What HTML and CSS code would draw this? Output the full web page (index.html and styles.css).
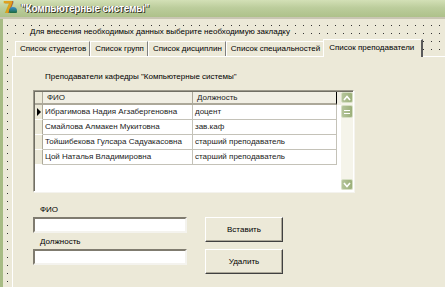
FILE: index.html
```html
<!DOCTYPE html>
<html lang="ru">
<head>
  <meta charset="UTF-8" />
  <title>Компьютерные системы</title>
  <link rel="stylesheet" href="styles.css">
</head>
<body>

  <div class="window">
    <!-- TITLE BAR -->
    <div class="titlebar">
      <span class="app-icon"><span class="seven">7</span><span class="helmet"></span></span>
      <span class="title">"Компьютерные системы"</span>
    </div>

    <!-- FORM CLIENT AREA -->
    <div class="client">
      <p class="hint">Для внесения необходимых данных выберите необходимую закладку</p>

      <div class="pages">
        <div class="tabs">
          <div class="tab">Список студентов</div>
          <div class="tab">Список групп</div>
          <div class="tab">Список дисциплин</div>
          <div class="tab">Список специальностей</div>
          <div class="tab active">Список преподаватели</div>
        </div>

        <div class="page">
          <p class="caption">Преподаватели кафедры "Компьютерные системы"</p>

          <div class="grid">
            <div class="table">
              <div class="row head">
                <div class="ind"></div>
                <div class="cell">ФИО</div>
                <div class="cell last">Должность</div>
              </div>
              <div class="row">
                <div class="ind"><span class="pointer"></span></div>
                <div class="cell">Ибрагимова Надия Агзабергеновна</div>
                <div class="cell">доцент</div>
              </div>
              <div class="row">
                <div class="ind"></div>
                <div class="cell">Смайлова Алмакен Мукитовна</div>
                <div class="cell">зав.каф</div>
              </div>
              <div class="row">
                <div class="ind"></div>
                <div class="cell">Тойшибекова Гулсара Садуакасовна</div>
                <div class="cell">старший преподаватель</div>
              </div>
              <div class="row">
                <div class="ind"></div>
                <div class="cell">Цой Наталья Владимировна</div>
                <div class="cell">старший преподаватель</div>
              </div>
            </div>

            <div class="vscroll">
              <div class="sb-btn">
                <svg width="8" height="6" viewBox="0 0 8 6"><path d="M1 5 L4 1.5 L7 5" fill="none" stroke="#fff" stroke-width="1.6"/></svg>
              </div>
              <div class="sb-thumb">
                <svg width="6" height="6" viewBox="0 0 6 6"><path d="M0 1.5 H6 M0 4.5 H6" stroke="#fff" stroke-width="1"/></svg>
              </div>
              <div class="sb-track"></div>
              <div class="sb-btn">
                <svg width="8" height="6" viewBox="0 0 8 6"><path d="M1 1 L4 4.5 L7 1" fill="none" stroke="#fff" stroke-width="1.6"/></svg>
              </div>
            </div>
          </div>

          <div class="editor">
            <div class="fields">
              <label>ФИО</label>
              <input type="text" class="edit" />
              <label class="second">Должность</label>
              <input type="text" class="edit" />
            </div>
            <div class="buttons">
              <button class="btn">Вставить</button>
              <button class="btn">Удалить</button>
            </div>
          </div>
        </div>
      </div>
    </div>
  </div>

</body>
</html>
```

FILE: styles.css
```css
* {
  box-sizing: border-box;
  margin: 0;
  padding: 0;
}

body {
  font-family: "Liberation Sans", Arial, sans-serif;
  font-size: 8px;
  color: #000;
  background: #ece9d8;
  overflow: hidden;
}

.window {
  width: 445px;
  height: 287px;
  display: flex;
  flex-direction: column;
  overflow: hidden;
}

/* TITLE BAR */
.titlebar {
  height: 19px;
  flex-shrink: 0;
  display: flex;
  align-items: center;
  padding-left: 3px;
  background: linear-gradient(#d3e0b6, #bccd9c 45%, #aec18a);
  border-bottom: 2px solid #c9c6b3;
}

.app-icon {
  position: relative;
  width: 14px;
  height: 15px;
  margin-right: 4px;
}

.seven {
  font-family: "DejaVu Sans", sans-serif;
  font-weight: bold;
  font-size: 15px;
  line-height: 15px;
  color: #e0a020;
  text-shadow: 1px 0 #8a5a10;
}

.helmet {
  position: absolute;
  left: 6px;
  top: 6px;
  width: 8px;
  height: 6px;
  border-radius: 4px 4px 1px 1px;
  background: linear-gradient(#3a8fd0, #1d6a3c);
}

.title {
  font-weight: bold;
  font-size: 10px;
  color: #fff;
  letter-spacing: -0.2px;
  text-shadow: 1px 1px 0 #3a3a2a, -1px 0 0 #6a6a50;
}

/* CLIENT AREA WITH DESIGN GRID */
.client {
  flex: 1;
  border-left: 3px solid #a7bb84;
  padding-left: 9px;
  background-color: #ece9d8;
  background-image: radial-gradient(circle at 0.5px 0.5px, #333 0.6px, transparent 0.8px);
  background-size: 8px 8px;
  background-position: 4px 6px;
}

.hint {
  margin: 8px 0 0 18px;
  line-height: 10px;
  font-size: 8px;
  background: #ece9d8;
  width: max-content;
}

/* PAGE CONTROL */
.pages {
  margin-top: 2px;
  width: 460px;
}

.tabs {
  display: flex;
  align-items: flex-end;
  height: 17px;
  padding-left: 3px;
}

.tab {
  height: 15px;
  line-height: 13px;
  padding: 0 3px 0 4px;
  font-size: 8px;
  background: #ece9d8;
  border-top: 1px solid #fff;
  border-left: 1px solid #fff;
  border-right: 1px solid #808080;
  white-space: nowrap;
}

.tab.active {
  line-height: 15px;
  margin-left: -1px;
  padding: 0 7px 0 5px;
  border-right: 2px solid #5a5a5a;
  position: relative;
  z-index: 1;
  margin-bottom: -1px;
  height: 18px;
}

.page {
  height: 240px;
  background: #ece9d8;
  border-top: 1px solid #fff;
  border-left: 1px solid #fff;
  padding: 15px 0 0 20px;
}

.caption {
  margin-left: 12px;
  line-height: 10px;
  font-size: 8px;
}

/* DB GRID */
.grid {
  margin-top: 8px;
  width: 321px;
  height: 102px;
  display: flex;
  background: #fff;
  border: 1px solid;
  border-color: #9d9a8c #fff #fff #9d9a8c;
  box-shadow: inset 1px 1px 0 #716f64, 1px 1px 0 #f4f3ee;
  padding: 1px 0 1px 1px;
}

.table {
  flex: 1;
}

.row {
  display: grid;
  grid-template-columns: 8px 150px 144px;
  height: 15px;
  line-height: 14px;
  color: #222;
}

.row .cell {
  padding-left: 2px;
  border-bottom: 1px solid #c4c2b8;
  border-right: 1px solid #c4c2b8;
  white-space: nowrap;
  overflow: hidden;
}

.row.head {
  height: 13px;
  line-height: 12px;
  background: #f1efe4;
}

.row.head .cell {
  border-bottom: 2px solid #aca899;
  border-right: 1px solid #aca899;
  padding-left: 4px;
}

.row.head .cell.last {
  border-right: 1px solid #000;
}

.ind {
  background: #ece9d8;
  border-right: 1px solid #aca899;
  border-bottom: 1px solid #fff;
  position: relative;
}

.row.head .ind {
  border-bottom: 2px solid #aca899;
}

.pointer {
  position: absolute;
  left: 2px;
  top: 3px;
  border-left: 4px solid #000;
  border-top: 4px solid transparent;
  border-bottom: 4px solid transparent;
}

/* SCROLLBAR */
.vscroll {
  width: 12px;
  display: flex;
  flex-direction: column;
  background: #f5f4ea;
}

.sb-btn,
.sb-thumb {
  height: 11px;
  display: flex;
  align-items: center;
  justify-content: center;
  background: linear-gradient(90deg, #b4c49a, #9cb07a);
  border: 1px solid #d6dfc4;
  border-radius: 2px;
}

.sb-thumb {
  height: 13px;
  margin-top: 2px;
}

.sb-track {
  flex: 1;
}

/* EDIT FIELDS + BUTTONS */
.editor {
  display: flex;
  gap: 18px;
  margin-top: 12px;
}

.fields {
  display: flex;
  flex-direction: column;
  width: 154px;
}

.fields label {
  padding-left: 7px;
  line-height: 11px;
  font-size: 8px;
  margin-bottom: 2px;
}

.fields label.second {
  margin-top: 3px;
}

.edit {
  height: 16px;
  width: 154px;
  background: #fff;
  border: 2px solid;
  border-color: #7f7b6f #f4f3ee #f4f3ee #7f7b6f;
  outline: none;
}

.buttons {
  display: flex;
  flex-direction: column;
  gap: 7px;
  padding-top: 13px;
}

.btn {
  width: 78px;
  height: 25px;
  font-family: "Liberation Sans", Arial, sans-serif;
  font-size: 8px;
  background: #ece9d8;
  border: 1px solid;
  border-color: #fff #404040 #404040 #fff;
  box-shadow: inset -1px -1px 0 #aca899;
  color: #000;
}
```
